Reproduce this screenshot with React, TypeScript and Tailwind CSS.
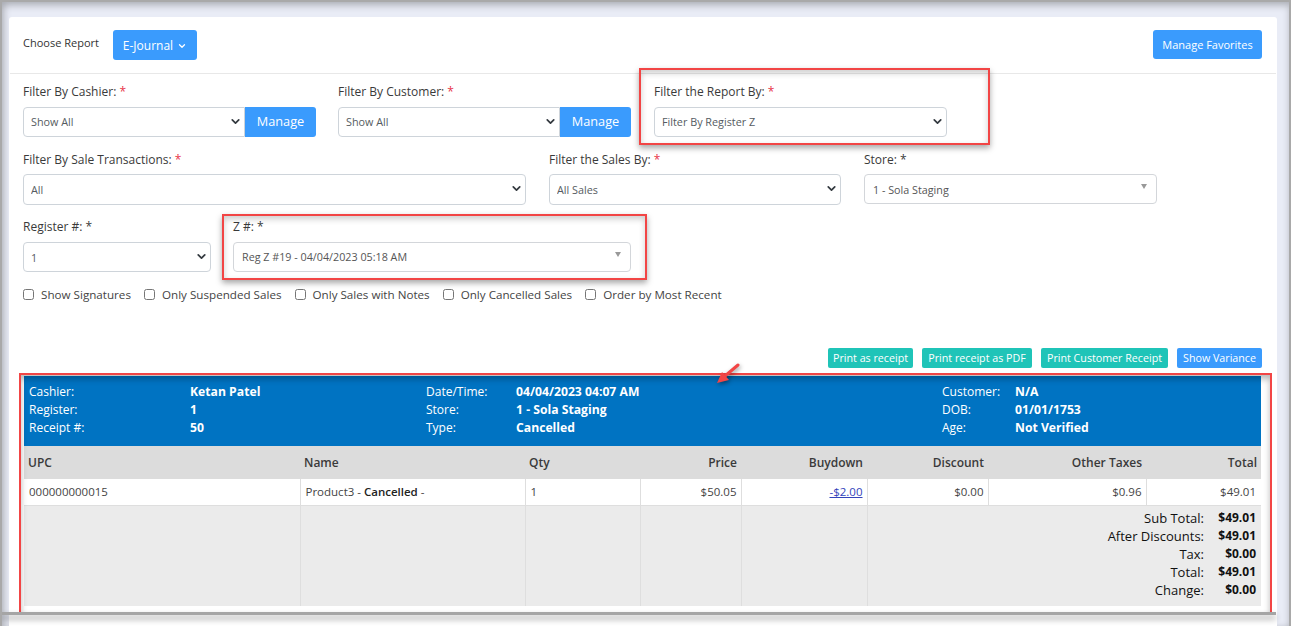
import { ChevronDown } from 'lucide-react';

const font = { fontFamily: '"Open Sans", sans-serif' };

function Label({ text, req }: { text: string; req?: 'red' | 'plain' }) {
  return (
    <div className="h-[18px] text-[12px] leading-[18px] text-[#3a3a3a]">
      {text} <span className={req === 'red' ? 'text-[#e8344a]' : 'text-[#3a3a3a]'}>*</span>
    </div>
  );
}

function NativeSelect({ value, rounded = 'rounded-[4px]', tall, top }: { value: string; rounded?: string; tall?: boolean; top?: boolean }) {
  return (
    <div className="relative flex-1 min-w-0">
      <select
        defaultValue={value}
        className={`w-full appearance-none border border-[#ced4da] bg-white pl-[7px] text-[10.8px] text-[#555b61] ${top ? 'pt-0' : 'pt-[2px]'} ${tall ? 'h-[31px]' : 'h-[30px]'} ${rounded}`}
      >
        <option>{value}</option>
      </select>
      <ChevronDown size={13} strokeWidth={3.2} className="pointer-events-none absolute right-[3px] top-[8px] text-[#343a40]" />
    </div>
  );
}

function ComboBox({ value, tall }: { value: string; tall?: boolean }) {
  return (
    <div className={`relative flex h-[30px] items-center rounded-[4px] border border-[#d3d6da] bg-white pl-[8px] text-[10.75px] text-[#555] ${tall ? 'pt-[3px]' : 'pt-[1px]'}`}>
      {value}
      <span className="absolute right-[9px] top-[9px] h-0 w-0 border-x-[3px] border-t-[5px] border-x-transparent border-t-[#999]" />
    </div>
  );
}

function ManageButton() {
  return (
    <button className="flex h-[30px] w-[71px] shrink-0 items-center justify-center rounded-r-[3px] bg-[#3a9bfd] pb-[1px] text-[12.75px] text-white">
      Manage
    </button>
  );
}

const checks = ['Show Signatures', 'Only Suspended Sales', 'Only Sales with Notes', 'Only Cancelled Sales', 'Order by Most Recent'];

const actions = [
  { text: 'Print as receipt', cls: 'bg-[#1fc4b8] w-[85px]' },
  { text: 'Print receipt as PDF', cls: 'bg-[#1fc4b8] w-[110px] ml-[9px]' },
  { text: 'Print Customer Receipt', cls: 'bg-[#1fc4b8] w-[127px] ml-[9px]' },
  { text: 'Show Variance', cls: 'bg-[#3a9bfd] w-[85px] ml-[9px]' },
];

const cols = [276, 225, 115, 101, 126, 121, 158, 115];
const heads = ['UPC', 'Name', 'Qty', 'Price', 'Buydown', 'Discount', 'Other Taxes', 'Total'];

const totals = [
  ['Sub Total:', '$49.01'],
  ['After Discounts:', '$49.01'],
  ['Tax:', '$0.00'],
  ['Total:', '$49.01'],
  ['Change:', '$0.00'],
];

export default function App() {
  return (
    <div style={font} className="relative h-[626px] w-[1291px] overflow-hidden border-x-2 border-t-2 border-[#a9a9a9] bg-[#e9ecf6] pl-[7px] pr-[12px] pt-[15px] shadow-[inset_0_4px_7px_rgba(0,0,0,0.2),inset_4px_0_6px_rgba(0,0,0,0.1)]">
      <div className="h-[620px] rounded-t-[3px] bg-white">
        {/* Top bar */}
        <div className="mx-[1px] flex h-[57px] items-start justify-between border-b border-[#e8e8e8] pl-[13px] pr-[14px] pt-[13px]">
          <div className="flex items-start">
            <span className="mt-[4px] w-[90px] text-[11px] leading-[18px] text-[#333]">Choose Report</span>
            <button className="flex h-[30px] w-[84px] items-center justify-center gap-[4px] rounded-[3px] bg-[#3a9bfd] pt-[2px] text-[12px] text-white">
              E-Journal <ChevronDown size={10} strokeWidth={3} />
            </button>
          </div>
          <button className="h-[29px] w-[109px] rounded-[3px] bg-[#3a9bfd] pt-[2px] text-[11px] text-white">Manage Favorites</button>
        </div>

        {/* Filters */}
        <div className="px-[14px] pt-[9px]">
          <div className="flex gap-[22px]">
            <div className="w-[293px]">
              <Label text="Filter By Cashier:" req="red" />
              <div className="mt-[6px] flex">
                <NativeSelect value="Show All" rounded="rounded-l-[4px]" top />
                <ManageButton />
              </div>
            </div>
            <div className="w-[293px]">
              <Label text="Filter By Customer:" req="red" />
              <div className="mt-[6px] flex">
                <NativeSelect value="Show All" rounded="rounded-l-[4px]" top />
                <ManageButton />
              </div>
            </div>
            <div className="ml-[1px] w-[293px]">
              <Label text="Filter the Report By:" req="red" />
              <div className="mt-[6px] flex">
                <NativeSelect value="Filter By Register Z" top />
              </div>
            </div>
          </div>

          <div className="mt-[14px] flex gap-[23px]">
            <div className="w-[503px]">
              <Label text="Filter By Sale Transactions:" req="red" />
              <div className="mt-[5px] flex">
                <NativeSelect value="All" tall />
              </div>
            </div>
            <div className="w-[292px]">
              <Label text="Filter the Sales By:" req="red" />
              <div className="mt-[5px] flex">
                <NativeSelect value="All Sales" tall />
              </div>
            </div>
            <div className="w-[293px]">
              <Label text="Store:" />
              <div className="mt-[5px]">
                <ComboBox value="1 - Sola Staging" tall />
              </div>
            </div>
          </div>

          <div className="mt-[13px] flex gap-[22px]">
            <div className="w-[188px]">
              <Label text="Register #:" />
              <div className="mt-[6px] flex">
                <NativeSelect value="1" />
              </div>
            </div>
            <div className="w-[398px]">
              <Label text="Z #:" />
              <div className="mt-[6px]">
                <ComboBox value="Reg Z #19 - 04/04/2023 05:18 AM" />
              </div>
            </div>
          </div>

          <div className="mt-[14px] flex h-[18px] items-center gap-[13px]">
            {checks.map((c) => (
              <label key={c} className="flex items-center gap-[7px] text-[11.65px] text-[#444]">
                <input type="checkbox" className="m-0 h-[11px] w-[11px]" />
                {c}
              </label>
            ))}
          </div>
        </div>

        {/* Actions */}
        <div className="mt-[44px] flex justify-end pr-[15px]">
          {actions.map((a) => (
            <button key={a.text} className={`h-[20px] rounded-[2px] pt-[1px] text-[10.7px] text-white ${a.cls}`}>
              {a.text}
            </button>
          ))}
        </div>

        {/* Receipt */}
        <div className="ml-[15px] mr-[16px] mt-[8px]">
          <div className="grid h-[70px] grid-cols-[161px_236px_90px_426px_73px_1fr] content-start bg-[#0073c2] pl-[5px] pt-[7px] text-[12px] leading-[18px] text-white">
            <span>Cashier:</span>
            <b className="text-[12.2px] font-bold">Ketan Patel</b>
            <span>Date/Time:</span>
            <b className="text-[12.2px] font-bold">04/04/2023 04:07 AM</b>
            <span>Customer:</span>
            <b className="text-[12.2px] font-bold">N/A</b>
            <span>Register:</span>
            <b className="text-[12.2px] font-bold">1</b>
            <span>Store:</span>
            <b className="text-[12.2px] font-bold">1 - Sola Staging</b>
            <span>DOB:</span>
            <b className="text-[12.2px] font-bold">01/01/1753</b>
            <span>Receipt #:</span>
            <b className="text-[12.2px] font-bold">50</b>
            <span>Type:</span>
            <b className="text-[12.2px] font-bold">Cancelled</b>
            <span>Age:</span>
            <b className="text-[12.2px] font-bold">Not Verified</b>
          </div>

          <table className="w-full table-fixed border-collapse text-[11.5px] text-[#444]">
            <colgroup>
              {cols.map((w, i) => (
                <col key={i} style={{ width: w }} />
              ))}
            </colgroup>
            <thead>
              <tr className="h-[33px] bg-[#dcdcdc] text-[12px] font-semibold text-[#3a3a3a]">
                {heads.map((h, i) => (
                  <th key={h} className={`px-[4px] font-semibold ${i > 2 ? 'text-right' : 'text-left'}`}>
                    {h}
                  </th>
                ))}
              </tr>
            </thead>
            <tbody>
              <tr className="h-[26px] bg-white">
                <td className="border border-l-0 border-t-0 border-[#dedede] px-[5px]">000000000015</td>
                <td className="border border-t-0 border-[#dedede] px-[5px]">
                  Product3 - <span className="font-semibold text-[#222]">Cancelled</span> -
                </td>
                <td className="border border-t-0 border-[#dedede] px-[5px]">1</td>
                <td className="border border-t-0 border-[#dedede] px-[4px] text-right">$50.05</td>
                <td className="border border-t-0 border-[#dedede] px-[4px] text-right">
                  <a className="text-[#3344bb] underline">-$2.00</a>
                </td>
                <td className="border border-t-0 border-[#dedede] px-[4px] text-right">$0.00</td>
                <td className="border border-t-0 border-[#dedede] px-[4px] text-right">$0.96</td>
                <td className="border border-r-0 border-t-0 border-[#dedede] px-[5px] text-right">$49.01</td>
              </tr>
              <tr className="h-[101px] bg-[#ebebeb]">
                <td className="border-r border-[#dedede]" />
                <td className="border-r border-[#dedede]" />
                <td className="border-r border-[#dedede]" />
                <td className="border-r border-[#dedede]" />
                <td className="border-r border-[#dedede]" />
                <td colSpan={3} className="pr-[5px] pt-[3px] align-top">
                  <div className="grid grid-cols-[1fr_52px] text-right text-[12px] leading-[18px] text-[#111]">
                    {totals.map(([k, v]) => (
                      <div key={k} className="contents">
                        <span className="text-[13px] font-medium">{k}</span>
                        <b className="font-bold">{v}</b>
                      </div>
                    ))}
                  </div>
                </td>
              </tr>
            </tbody>
          </table>
        </div>
      </div>

      {/* Annotation boxes */}
      <div className="absolute left-[637px] top-[66px] h-[77px] w-[351px] border-2 border-[#f24545] shadow-[0_3px_6px_rgba(0,0,0,0.35),inset_0_3px_6px_rgba(0,0,0,0.2)]" />
      <div className="absolute left-[220px] top-[212px] h-[66px] w-[425px] border-2 border-[#f24545] shadow-[0_3px_6px_rgba(0,0,0,0.35),inset_0_3px_6px_rgba(0,0,0,0.2)]" />
      <div className="absolute left-[17px] top-[371px] h-[241px] w-[1253px] border-2 border-b-0 border-[#f24545] shadow-[inset_0_4px_6px_rgba(0,0,0,0.28)]" />
      <svg className="absolute left-[708px] top-[356px] drop-shadow-[1px_2px_2px_rgba(0,0,0,0.4)]" width="40" height="34" viewBox="0 0 40 34">
        <path d="M28 7 L15 18" stroke="#f24545" strokeWidth="3" strokeLinecap="round" />
        <path d="M7 25 L12 14 L19 22 Z" fill="#f24545" />
      </svg>

      {/* Bottom edge of the captured window */}
      <div className="absolute left-0 top-[610px] h-[3px] w-[1274px] bg-[#a5a5a5] shadow-[0_4px_6px_rgba(0,0,0,0.4)]" />
    </div>
  );
}
